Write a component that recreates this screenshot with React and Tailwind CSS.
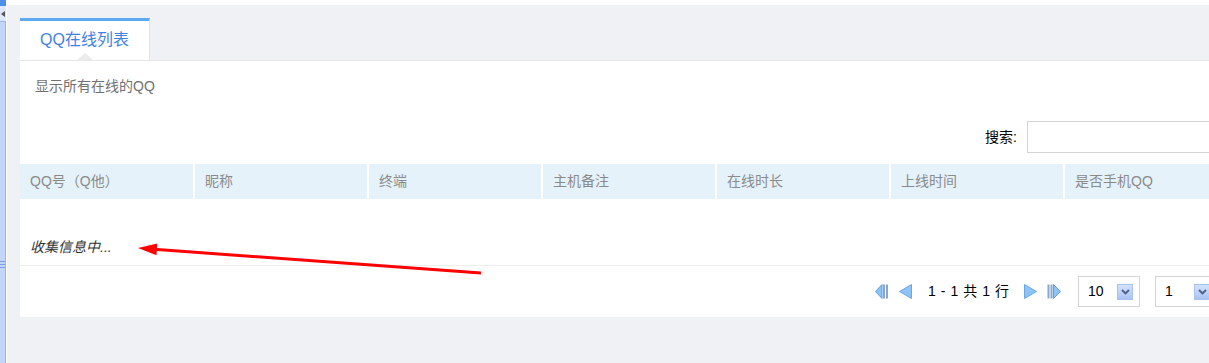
export default function App() {
  const cols = ["QQ号（Q他）", "昵称", "终端", "主机备注", "在线时长", "上线时间", "是否手机QQ"];
  const Select = ({ value, extra = "" }) => (
    <div className={`flex h-[31px] w-[62px] items-center justify-between border border-[#d4d4d4] bg-white pl-[9px] pr-[6px] text-[14px] text-black ${extra}`}>
      <span>{value}</span>
      <span className="flex h-[16px] w-[16px] items-center justify-center border border-[#a9c1ee] bg-gradient-to-b from-[#d4e2fc] to-[#a8c3f4]">
        <svg width="9" height="6" viewBox="0 0 9 6">
          <path d="M1 1 L4.5 4.5 L8 1" fill="none" stroke="#4a5d82" strokeWidth="1.8" />
        </svg>
      </span>
    </div>
  );
  return (
    <div className="relative flex h-[363px] w-[1209px] overflow-hidden bg-[#f0f1f5] font-['Liberation_Sans','Noto_Sans_CJK_SC',sans-serif]">
      {/* left sidebar */}
      <div className="flex w-[7px] shrink-0 flex-col border-r border-white">
        <div className="h-[6px] bg-[#4f8fea]" />
        <div className="flex h-[16px] items-center justify-center border-b border-[#9ab4ee] bg-[#dfe8fb]">
          <span className="h-0 w-0 border-y-[3px] border-r-[4px] border-y-transparent border-r-[#555]" />
        </div>
        <div className="flex flex-1 flex-col border-r border-[#97b2ec] bg-[#c3d5fb]">
          <div className="mt-[239px] flex flex-col gap-[2px]">
            <div className="h-px bg-[#7c9ee4]" />
            <div className="h-px bg-[#7c9ee4]" />
            <div className="h-px bg-[#7c9ee4]" />
          </div>
        </div>
      </div>

      {/* main */}
      <div className="flex min-w-0 flex-1 flex-col">
        <div className="h-[5px] bg-white" />
        <div className="flex flex-col pl-[13px] pt-[13px]">
          <div className="flex h-[42px]">
            <div className="relative flex w-[130px] items-center justify-center border-r border-t-[3px] border-r-[#e3e3e3] border-t-[#5eaaf2] bg-white pb-[2px] text-[16px] text-[#3f82e4]">
              QQ在线列表
              <span className="absolute bottom-0 left-[57px] h-0 w-0 border-x-[8px] border-b-[7px] border-x-transparent border-b-[#ececec]" />
            </div>
          </div>

          <div className="w-[1189px] border-t border-[#e6e6e6] bg-white">
            <div className="pl-[15px] pt-[15px] text-[14px] leading-[20px] text-[#707070]">显示所有在线的QQ</div>

            <div className="mt-[25px] flex h-[32px] items-center justify-end">
              <span className="mr-[10px] text-[14px] text-black">搜索:</span>
              <div className="mr-[-18px] h-[32px] w-[200px] border border-[#d4d4d4] bg-white" />
            </div>

            <div className="mt-[11px] flex h-[35px] gap-[2px]">
              {cols.map((c, i) => (
                <div
                  key={c}
                  className={`flex shrink-0 items-center bg-[#e6f2fa] pl-[10px] text-[14px] text-[#8a8a8a] ${i === 0 ? "w-[173px]" : "w-[172px]"}`}
                >
                  {c}
                </div>
              ))}
            </div>

            <div className="h-[67px] border-b border-[#eeeeee] pl-[10px] pt-[38px] text-[14px] italic leading-[20px] text-[#333]">
              收集信息中...
            </div>

            <div className="flex h-[51px] items-center justify-end text-[14px] text-black">
              {/* first */}
              <svg width="14" height="15" viewBox="0 0 14 15" className="mr-[10px]">
                <polygon points="0.5,7.5 7,0.5 7,14.5" fill="#8ec3f7" stroke="#5d9de3" strokeWidth="1" />
                <rect x="8" y="0.5" width="2" height="14" fill="#86a6cf" />
                <rect x="11" y="0.5" width="2" height="14" fill="#86a6cf" />
              </svg>
              {/* prev */}
              <svg width="13" height="15" viewBox="0 0 13 15" className="mr-[16px]">
                <polygon points="0.5,7.5 12.5,0.5 12.5,14.5" fill="#8ec3f7" stroke="#6aa6e6" strokeWidth="1" />
              </svg>
              <div className="flex items-center gap-[5px]">
                <span>1</span>
                <span>-</span>
                <span>1</span>
                <span>共</span>
                <span>1</span>
                <span>行</span>
              </div>
              {/* next */}
              <svg width="13" height="15" viewBox="0 0 13 15" className="ml-[15px] mr-[10px]">
                <polygon points="0.5,0.5 12.5,7.5 0.5,14.5" fill="#8ec3f7" stroke="#6aa6e6" strokeWidth="1" />
              </svg>
              {/* last */}
              <svg width="14" height="15" viewBox="0 0 14 15" className="mr-[17px]">
                <rect x="0.5" y="0.5" width="2" height="14" fill="#86a6cf" />
                <rect x="3.5" y="0.5" width="2" height="14" fill="#86a6cf" />
                <polygon points="6.5,0.5 13.5,7.5 6.5,14.5" fill="#8ec3f7" stroke="#5d9de3" strokeWidth="1" />
              </svg>
              <Select value="10" extra="mr-[15px]" />
              <Select value="1" extra="mr-[-8px]" />
            </div>
          </div>
        </div>
      </div>

      {/* red annotation arrow */}
      <svg className="pointer-events-none absolute left-0 top-0" width="1209" height="363" viewBox="0 0 1209 363">
        <line x1="481" y1="273" x2="154" y2="249.3" stroke="#ff0000" strokeWidth="3" />
        <polygon points="138,248 157.3,243.6 156.5,255.2" fill="#ff0000" />
      </svg>
    </div>
  );
}
